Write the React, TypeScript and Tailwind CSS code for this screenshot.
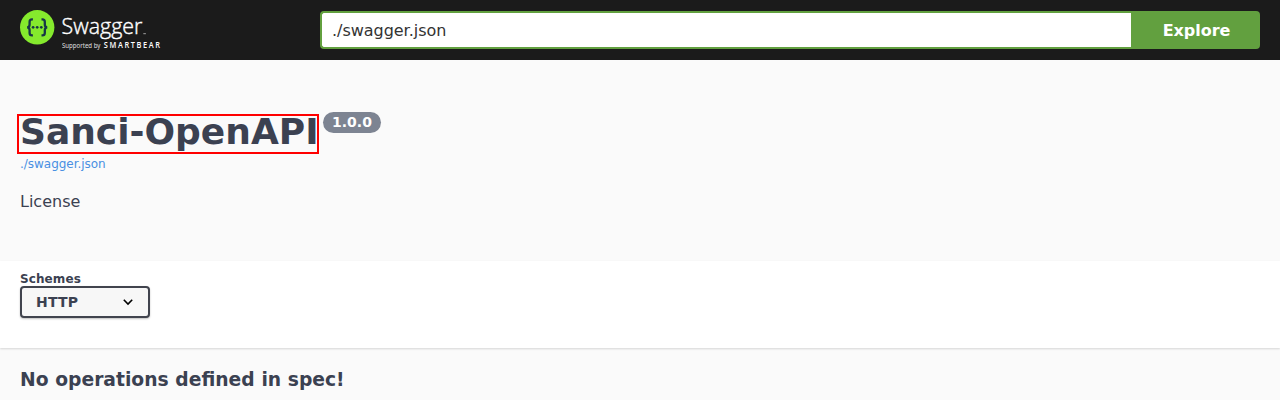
function Logo() {
  return (
    <svg width="142" height="40" viewBox="20 10 142 40" role="img" aria-label="Swagger" className="block shrink-0">
      <circle cx="37.2" cy="27.3" r="17.2" fill="#85ea2d" />
      <g fill="none" stroke="#173647" strokeWidth="2.3">
        <path d="M32.9 19.3h-.8c-1.7 0-2.5.8-2.5 2.4v2.7c0 1.9-.7 2.9-2.5 2.9 1.8 0 2.5 1 2.5 2.9v2.7c0 1.6.8 2.4 2.5 2.4h.8" />
        <path d="M41.5 19.3h.8c1.7 0 2.5.8 2.5 2.4v2.7c0 1.9.7 2.9 2.5 2.9-1.8 0-2.5 1-2.5 2.9v2.7c0 1.6-.8 2.4-2.5 2.4h-.8" />
      </g>
      <g fill="#173647">
        <circle cx="33.1" cy="27.3" r="1.35" />
        <circle cx="37.2" cy="27.3" r="1.35" />
        <circle cx="41.3" cy="27.3" r="1.35" />
      </g>
      <g fill="#fff">
        <text x="61.6" y="34.2" fontSize="22" fontWeight="300" stroke="#fff" strokeWidth=".4" textLength="80.7" lengthAdjust="spacingAndGlyphs" className="font-['Open_Sans',sans-serif]">Swagger</text>
        <path d="M143.3 33.7h2.6" stroke="#fff" strokeWidth=".9" opacity=".65" />
        <text x="62" y="48" fontSize="6.2" opacity=".85" textLength="38.4" lengthAdjust="spacingAndGlyphs" className="font-['Noto_Sans',sans-serif]">Supported by</text>
        <text transform="translate(103.8 48) scale(.86 1)" x="0" y="0" fontSize="8.6" fontWeight="600" textLength="65.4" className="font-['Open_Sans',sans-serif]">SMARTBEAR</text>
      </g>
    </svg>
  );
}

export default function App() {
  return (
    <div className="h-[400px] overflow-hidden bg-[#fafafa] font-['DejaVu_Sans',sans-serif] text-[#3b4151]">
      <header className="flex h-[60px] items-center bg-[#1b1b1b] px-5">
        <div className="w-[300px]">
          <Logo />
        </div>
        <form className="flex h-[38px] flex-1" onSubmit={(e) => e.preventDefault()}>
          <input
            type="text"
            aria-label="Specification URL"
            defaultValue="./swagger.json"
            className="min-w-0 flex-1 rounded-l-[4px] border-2 border-r-0 border-[#62a03f] bg-white px-[10px] pt-[2px] text-base tracking-[-0.03px] text-[#333] outline-none"
          />
          <button className="w-[129px] rounded-r-[4px] bg-[#62a03f] pt-[2px] pl-[2px] text-base font-bold tracking-[-0.05px] text-white">Explore</button>
        </form>
      </header>
      <section className="h-[201px] px-5 pt-[50px]">
        <div className="flex items-start">
          <h2 className="-ml-[3px] mt-1 h-10 w-[302px] whitespace-nowrap border-2 border-[#f00] pl-px text-[36px] leading-[31px] font-bold">Sanci-OpenAPI</h2>
          <span className="ml-1 mt-[2px] flex h-[21px] w-[58px] items-center justify-center rounded-full bg-[#7d8492] pb-px text-sm leading-5 font-bold text-white">1.0.0</span>
        </div>
        <a href="#" className="mt-[2px] block text-xs leading-4 tracking-[-0.03px] text-[#4990e2]">./swagger.json</a>
        <p className="mt-5 text-base leading-5">License</p>
      </section>
      <section className="h-[87px] bg-white px-5 pt-[10px] shadow-[0_1px_2px_0_rgba(0,0,0,0.15)]">
        <label className="block pt-px text-xs leading-[14px] font-bold tracking-[0.1px]">Schemes</label>
        <button className="flex h-8 w-[130px] items-center justify-between rounded-[4px] border-2 border-[#41444e] bg-[#f7f7f7] px-[14px] text-sm font-bold tracking-[0.2px] shadow-[0_1px_2px_0_rgba(0,0,0,0.25)]">
          HTTP
          <svg width="12" height="8" viewBox="0 0 12 8" fill="none" stroke="#000" strokeWidth="1.6" aria-hidden="true">
            <path d="M1.8 1.8 6 6l4.2-4.2" />
          </svg>
        </button>
      </section>
      <h3 className="px-5 pt-[21px] text-[18.72px] leading-[22px] font-bold [word-spacing:0.2px]">No operations defined in spec!</h3>
    </div>
  );
}
